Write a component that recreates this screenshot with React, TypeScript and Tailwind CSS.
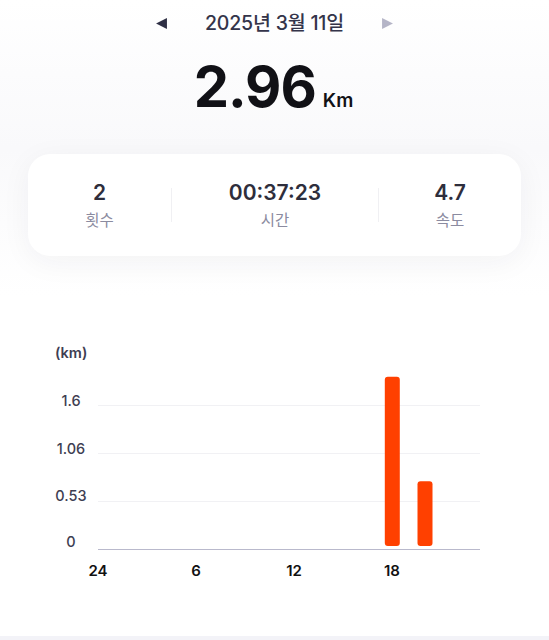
import { useState } from 'react'

const font = { fontFamily: 'Inter, "Noto Sans CJK KR", sans-serif' }

const stats = [
  { value: '2', label: '횟수' },
  { value: '00:37:23', label: '시간' },
  { value: '4.7', label: '속도' },
]

// 시간대별 거리 (km)
const bars = [
  { hour: 18, km: 1.88 },
  { hour: 20, km: 0.72 },
]

function DistanceChart() {
  const x0 = 98
  const perHour = 16.35
  const yBase = 548
  const perKm = 90
  const ticks = [
    { label: '1.6', y: 405 },
    { label: '1.06', y: 453 },
    { label: '0.53', y: 500 },
    { label: '0', y: 546 },
  ]

  return (
    <svg width="549" height="260" viewBox="0 330 549 260" className="block">
      <text x="55" y="357" fontSize="14.5" fontWeight="600" fill="#3e3e52">(km)</text>
      {ticks.map(t => (
        <text key={t.label} x="71" y={t.y} fontSize="14.5" fontWeight="500" fill="#3e3e52" textAnchor="middle">
          {t.label}
        </text>
      ))}
      {[404, 452, 500].map(y => (
        <line key={y} x1={x0} x2="480" y1={y + 0.5} y2={y + 0.5} stroke="#f1f1f4" strokeWidth="1" />
      ))}
      <line x1={x0} x2="480" y1={yBase + 0.5} y2={yBase + 0.5} stroke="#b9b9cc" strokeWidth="1" />
      {bars.map(b => {
        const cx = x0 + b.hour * perHour
        const h = b.km * perKm
        return (
          <rect
            key={b.hour}
            x={cx - 7.5}
            y={yBase - 3 - h}
            width="15"
            height={h}
            rx="3"
            fill="#ff4000"
          />
        )
      })}
      {['24', '6', '12', '18'].map((l, i) => (
        <text
          key={l}
          x={x0 + i * 98}
          y="575"
          fontSize="15"
          fontWeight="600"
          fill="#111"
          textAnchor="middle"
        >
          {l}
        </text>
      ))}
    </svg>
  )
}

export default function App() {
  const [date] = useState('2025년 3월 11일')

  return (
    <div className="w-[549px] h-[640px] overflow-hidden bg-white flex flex-col" style={font}>
      <div className="bg-gradient-to-b from-white via-[#f9f9fb] to-white">
        {/* 날짜 */}
        <div className="flex items-center justify-center gap-[37px] pt-[11px] h-[36px]">
          <svg width="13" height="13" viewBox="0 0 12 12">
            <path d="M11 1v10L1 6z" fill="#2f3045" />
          </svg>
          <span className="text-[19.5px] font-medium text-[#34344a] tracking-[-0.2px]">{date}</span>
          <svg width="13" height="13" viewBox="0 0 12 12">
            <path d="M1 1v10l10-5z" fill="#b5b5c7" />
          </svg>
        </div>

        {/* 총 거리 */}
        <div className="flex items-end justify-center gap-[7px] mt-[20px] h-[66px] pr-[2px]">
          <span className="text-[56px] leading-none font-bold text-[#111116] tracking-[-1px] translate-y-[-7px]">2.96</span>
          <span className="text-[19px] leading-none font-semibold text-[#111116] mb-[12px]">Km</span>
        </div>

        {/* 요약 카드 */}
        <div className="px-[28px] pt-[32px] pb-[40px]">
          <div className="h-[102px] rounded-[22px] bg-white shadow-[0_6px_30px_rgba(30,30,60,0.05)] grid grid-cols-[1fr_1.45fr_1fr] items-center">
            {stats.map((s, i) => (
              <div key={s.label} className="flex items-center">
                {i > 0 && <div className="w-px h-[34px] bg-[#f0f0f3]" />}
                <div className="flex-1 flex flex-col items-center gap-[6px] pt-[1px]">
                  <span className="text-[21px] leading-[24px] font-semibold text-[#2e2e3c]">{s.value}</span>
                  <span className="text-[15.5px] leading-[20px] text-[#8b8ba0]">{s.label}</span>
                </div>
              </div>
            ))}
          </div>
        </div>
      </div>

      {/* 차트 */}
      <div className="mt-[35px]">
        <DistanceChart />
      </div>

      <div className="flex-1" />
      <div className="h-[4px] bg-[#f3f3f8]" />
    </div>
  )
}
